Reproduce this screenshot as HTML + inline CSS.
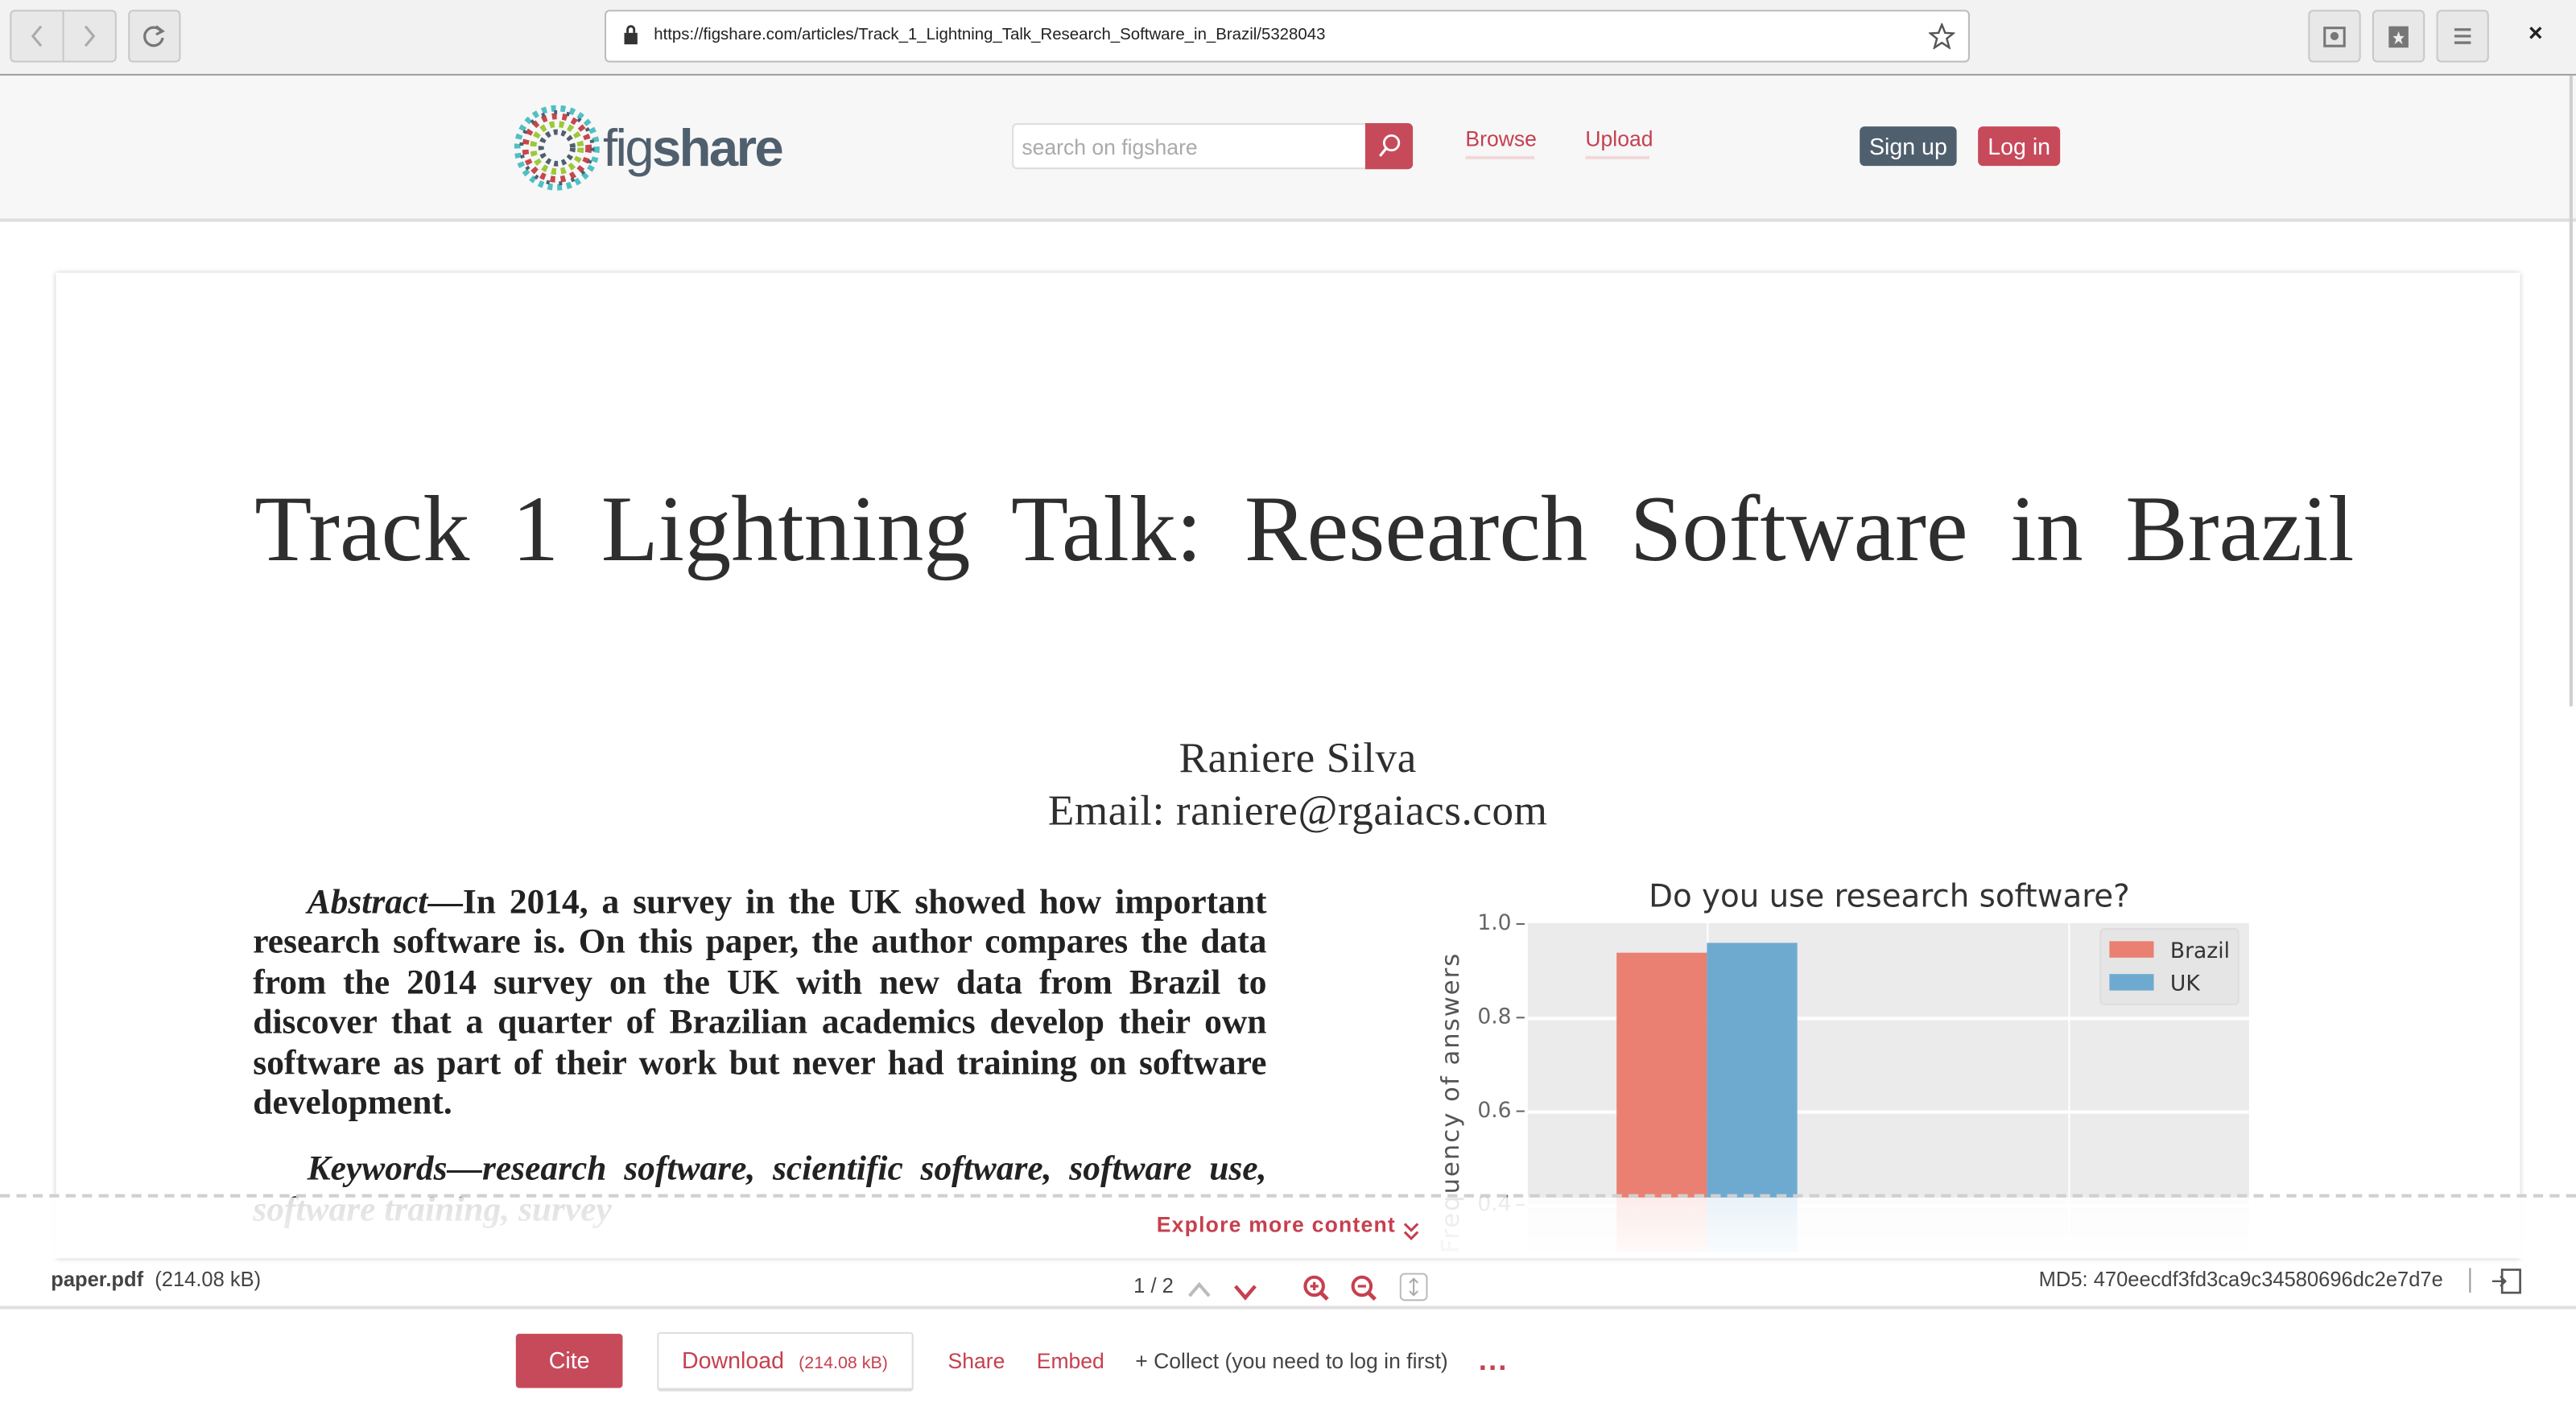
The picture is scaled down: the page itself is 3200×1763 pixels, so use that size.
<!DOCTYPE html>
<html><head><meta charset="utf-8"><style>
html,body{margin:0;padding:0;width:3200px;height:1762px;overflow:hidden;background:#fff}
#w{position:absolute;left:0;top:0;width:1568px;height:864px;transform:scale(2.0408163);transform-origin:0 0;font-family:"Liberation Sans","DejaVu Sans",sans-serif;overflow:hidden}
.a{position:absolute}
.btn{position:absolute;background:#e8e8e8;border:1px solid #c8c8c8;border-radius:3px;box-sizing:border-box}
.serif{font-family:"Liberation Serif",serif;color:#2e2e2e}
.red{color:#c6404f}
</style></head><body><div id="w">
<!-- browser chrome -->
<div class="a" style="left:0;top:0;width:1568px;height:45px;background:#f2f2f2;border-bottom:1px solid #9a9a9a"></div>
<div class="btn" style="left:6px;top:6px;width:65px;height:32px"></div>
<div class="a" style="left:38px;top:7px;width:1px;height:30px;background:#c8c8c8"></div>
<svg class="a" style="left:16px;top:14px" width="14" height="16"><path d="M9 2 L4 8 L9 14" stroke="#aaa" stroke-width="1.5" fill="none"/></svg>
<svg class="a" style="left:47px;top:14px" width="14" height="16"><path d="M5 2 L10 8 L5 14" stroke="#aaa" stroke-width="1.5" fill="none"/></svg>
<div class="btn" style="left:78px;top:6px;width:32px;height:32px"></div>
<svg class="a" style="left:86px;top:14px" width="16" height="16"><path d="M12 5 A5.5 5.5 0 1 0 13 9" stroke="#777" stroke-width="1.6" fill="none"/><path d="M9 2 L13 5 L9 7" stroke="#777" stroke-width="1.5" fill="none"/></svg>
<div class="a" style="left:368px;top:6px;width:831px;height:32px;background:#fff;border:1px solid #bbb;border-radius:3px;box-sizing:border-box"></div>
<svg class="a" style="left:379px;top:15px" width="10" height="13"><rect x="1" y="5" width="8" height="7" fill="#333"/><path d="M3 5 V3 a2 2 0 0 1 4 0 V5" stroke="#333" stroke-width="1.4" fill="none"/></svg>
<div class="a" style="left:398px;top:16px;font-size:10px;color:#222;white-space:nowrap">https://figshare.com/articles/Track_1_Lightning_Talk_Research_Software_in_Brazil/5328043</div>
<svg class="a" style="left:1174px;top:14px" width="16" height="16"><path d="M8 1 L10 6 L15 6.3 L11 9.5 L12.5 15 L8 12 L3.5 15 L5 9.5 L1 6.3 L6 6 Z" stroke="#555" stroke-width="1.2" fill="none"/></svg>
<div class="btn" style="left:1405px;top:6px;width:32px;height:32px"></div>
<div class="btn" style="left:1444px;top:6px;width:32px;height:32px"></div>
<div class="btn" style="left:1483px;top:6px;width:32px;height:32px"></div>
<svg class="a" style="left:1413px;top:14px" width="16" height="16"><rect x="2" y="3" width="12" height="11" fill="none" stroke="#777" stroke-width="1.5"/><circle cx="8" cy="8" r="2.5" fill="#777"/></svg>
<svg class="a" style="left:1452px;top:14px" width="16" height="16"><rect x="2" y="2" width="12" height="13" fill="#777"/><path d="M8 5 L9 8 L11.5 8 L9.5 10 L10.5 13 L8 11 L5.5 13 L6.5 10 L4.5 8 L7 8Z" fill="#eee"/></svg>
<svg class="a" style="left:1492px;top:15px" width="14" height="14"><path d="M2 3H12M2 7H12M2 11H12" stroke="#777" stroke-width="1.6"/></svg>
<div class="a" style="left:1539px;top:12px;font-size:15px;color:#222;font-weight:bold">×</div>
<!-- header -->
<div class="a" style="left:0;top:46px;width:1568px;height:87px;background:#f7f7f7;border-bottom:2px solid #dedede"></div>
<div class="a" style="left:1564px;top:46px;width:2px;height:384px;background:#cfcfcf"></div>
<svg class="a" style="left:313px;top:64px" width="52" height="52" viewBox="-27 -27 54 54">
<g>
<circle r="25" fill="none" stroke="#4fc0c4" stroke-width="4" stroke-dasharray="3 3"/>
<circle r="20" fill="none" stroke="#c8464f" stroke-width="4" stroke-dasharray="3 3.5"/>
<circle r="15" fill="none" stroke="#9cc83a" stroke-width="4" stroke-dasharray="3 3"/>
<circle r="10" fill="none" stroke="#4f5f6d" stroke-width="3.5" stroke-dasharray="2.5 2.5"/>
<circle r="22.5" fill="none" stroke="#4f5f6d" stroke-width="2.5" stroke-dasharray="2 6"/>
</g></svg>
<div class="a" style="left:367px;top:70px;font-size:32px;color:#4f5f6d;letter-spacing:-1.3px;line-height:40px"><span>fig</span><b>share</b></div>
<div class="a" style="left:616px;top:75px;width:216px;height:28px;background:#fff;border:1px solid #ddd;box-sizing:border-box;border-radius:3px 0 0 3px"></div>
<div class="a" style="left:622px;top:82px;font-size:13px;color:#aaa">search on figshare</div>
<div class="a" style="left:831px;top:75px;width:29px;height:28px;background:#c74a5a;border-radius:0 3px 3px 0"></div>
<svg class="a" style="left:838px;top:81px" width="16" height="16"><circle cx="9" cy="6" r="4.5" stroke="#fff" stroke-width="1.4" fill="none"/><path d="M6 9 L2 14" stroke="#fff" stroke-width="1.6"/></svg>
<div class="a red" style="left:892px;top:77px;font-size:13px">Browse</div>
<div class="a red" style="left:965px;top:77px;font-size:13px">Upload</div>
<div class="a" style="left:892px;top:95px;width:42px;height:2px;background:#f0d8db"></div>
<div class="a" style="left:965px;top:95px;width:39px;height:2px;background:#f0d8db"></div>
<div class="a" style="left:1132px;top:77px;width:59px;height:24px;background:#4f5f6d;border-radius:3px;color:#fff;font-size:14px;text-align:center;line-height:24px">Sign up</div>
<div class="a" style="left:1204px;top:77px;width:50px;height:24px;background:#c74a5a;border-radius:3px;color:#fff;font-size:14px;text-align:center;line-height:24px">Log in</div>
<!-- paper card -->
<div class="a" style="left:34px;top:166px;width:1500px;height:600px;background:#fff;box-shadow:0 0 3px rgba(0,0,0,.25)"></div>
<div class="a serif" style="left:0;top:290px;width:1588px;text-align:center;font-size:57px;word-spacing:11.5px;white-space:nowrap">Track 1 Lightning Talk: Research Software in Brazil</div>
<div class="a serif" style="left:0;top:446px;width:1580px;text-align:center;font-size:26px;line-height:32px;letter-spacing:0.3px">Raniere Silva<br>Email: raniere@rgaiacs.com</div>
<div class="a serif" style="left:154px;top:537px;width:617px;font-size:21.3px;line-height:24.4px;font-weight:bold;text-align:justify;color:#222"><span style="padding-left:33px"></span><i>Abstract</i>—In 2014, a survey in the UK showed how important research software is. On this paper, the author compares the data from the 2014 survey on the UK with new data from Brazil to discover that a quarter of Brazilian academics develop their own software as part of their work but never had training on software development.<div style="height:16px"></div><span style="padding-left:33px"></span><i>Keywords—research software, scientific software, software use, software training, survey</i></div>
<!-- chart -->
<div class="a" style="left:930px;top:535px;width:440px;text-align:center;font-family:'DejaVu Sans',sans-serif;font-size:19px;color:#333">Do you use research software?</div>
<div class="a" style="left:930px;top:562px;width:439px;height:200px;background:#ebebeb"></div>
<div class="a" style="left:930px;top:619px;width:439px;height:2px;background:#fff"></div>
<div class="a" style="left:930px;top:676px;width:439px;height:2px;background:#fff"></div>
<div class="a" style="left:930px;top:733px;width:439px;height:2px;background:#fff"></div>
<div class="a" style="left:1039px;top:562px;width:1px;height:200px;background:#fff"></div>
<div class="a" style="left:1259px;top:562px;width:1px;height:200px;background:#fff"></div>
<div class="a" style="left:984px;top:580px;width:55px;height:182px;background:#e98072"></div>
<div class="a" style="left:1039px;top:574px;width:55px;height:188px;background:#6eaad0"></div>
<div class="a" style="left:1278px;top:565px;width:85px;height:47px;background:#e5e5e5;border:1px solid #ddd;border-radius:3px;box-sizing:border-box"></div>
<div class="a" style="left:1284px;top:573px;width:27px;height:10px;background:#e98072"></div>
<div class="a" style="left:1284px;top:593px;width:27px;height:10px;background:#6eaad0"></div>
<div class="a" style="left:1321px;top:570px;font-family:'DejaVu Sans',sans-serif;font-size:13px;color:#333;line-height:20px">Brazil<br>UK</div>
<div class="a" style="left:890px;top:534px;font-family:'DejaVu Sans',sans-serif;font-size:13px;color:#666;line-height:57px;text-align:right;width:30px">1.0<br>0.8<br>0.6<br>0.4</div>
<div class="a" style="left:923px;top:562px;width:5px;height:1px;background:#666;box-shadow:0 57px #666,0 114px #666,0 171px #666"></div>
<div class="a" style="left:793px;top:664px;width:180px;text-align:center;transform:rotate(-90deg);font-family:'DejaVu Sans',sans-serif;font-size:15px;color:#555;letter-spacing:1px;white-space:nowrap">Frequency of answers</div>
<!-- fade -->
<div class="a" style="left:0;top:729px;width:1568px;height:37px;background:linear-gradient(rgba(255,255,255,.85),rgba(255,255,255,.97))"></div>
<div class="a" style="left:0;top:727px;width:1568px;height:0;border-top:2px dashed #d0d0d0"></div>
<div class="a red" style="left:704px;top:738px;font-size:13px;font-weight:bold;letter-spacing:0.6px">Explore more content</div>
<svg class="a" style="left:853px;top:743px" width="12" height="14"><path d="M2 2 L6 6 L10 2 M2 7 L6 11 L10 7" stroke="#c6404f" stroke-width="1.5" fill="none"/></svg>
<!-- file bar -->
<div class="a" style="left:31px;top:772px;font-size:12.5px;color:#444"><b>paper.pdf</b> &nbsp;(214.08 kB)</div>
<div class="a" style="left:690px;top:776px;font-size:12.5px;color:#444">1 / 2</div>
<svg class="a" style="left:722px;top:779px" width="16" height="12"><path d="M2 10 L8 3 L14 10" stroke="#bbb" stroke-width="2" fill="none"/></svg>
<svg class="a" style="left:750px;top:780px" width="16" height="12"><path d="M2 3 L8 10 L14 3" stroke="#c6404f" stroke-width="2.2" fill="none"/></svg>
<svg class="a" style="left:792px;top:775px" width="18" height="18"><circle cx="8" cy="8" r="5.5" stroke="#c6404f" stroke-width="2" fill="none"/><path d="M12 12 L16 16" stroke="#c6404f" stroke-width="2.4"/><path d="M5.5 8H10.5M8 5.5V10.5" stroke="#c6404f" stroke-width="1.6"/></svg>
<svg class="a" style="left:821px;top:775px" width="18" height="18"><circle cx="8" cy="8" r="5.5" stroke="#c6404f" stroke-width="2" fill="none"/><path d="M12 12 L16 16" stroke="#c6404f" stroke-width="2.4"/><path d="M5.5 8H10.5" stroke="#c6404f" stroke-width="1.6"/></svg>
<div class="a" style="left:852px;top:775px;width:17px;height:17px;border:1px solid #bbb;border-radius:3px;box-sizing:border-box"></div>
<svg class="a" style="left:855px;top:777px" width="11" height="13"><path d="M5.5 2V11M3 4L5.5 1.5L8 4M3 9L5.5 11.5L8 9" stroke="#aaa" stroke-width="1" fill="none"/></svg>
<div class="a" style="left:1241px;top:772px;font-size:12.5px;color:#444">MD5: 470eecdf3fd3ca9c34580696dc2e7d7e</div>
<div class="a" style="left:1503px;top:772px;width:1px;height:15px;background:#999"></div>
<svg class="a" style="left:1516px;top:772px" width="20" height="16"><rect x="7" y="1" width="11" height="14" fill="none" stroke="#555" stroke-width="1.3"/><path d="M1 8H9M6 5L9 8L6 11" stroke="#555" stroke-width="1.2" fill="none"/></svg>
<div class="a" style="left:0;top:795px;width:1568px;height:2px;background:#e0e0e0"></div>
<!-- action bar -->
<div class="a" style="left:314px;top:812px;width:65px;height:33px;background:#c74a5a;border-radius:2px;color:#fff;font-size:14px;text-align:center;line-height:33px">Cite</div>
<div class="a" style="left:400px;top:811px;width:156px;height:36px;border:1px solid #ddd;border-bottom:2px solid #ddd;box-sizing:border-box;border-radius:2px"></div>
<div class="a red" style="left:415px;top:820px;font-size:14px">Download <span style="font-size:10.5px;margin-left:5px">(214.08 kB)</span></div>
<div class="a red" style="left:577px;top:821px;font-size:13px">Share</div>
<div class="a red" style="left:631px;top:821px;font-size:13px">Embed</div>
<div class="a" style="left:691px;top:821px;font-size:13px;color:#444">+ Collect (you need to log in first)</div>
<div class="a red" style="left:900px;top:818px;font-size:18px;font-weight:bold;letter-spacing:1px">...</div>
</div></body></html>
